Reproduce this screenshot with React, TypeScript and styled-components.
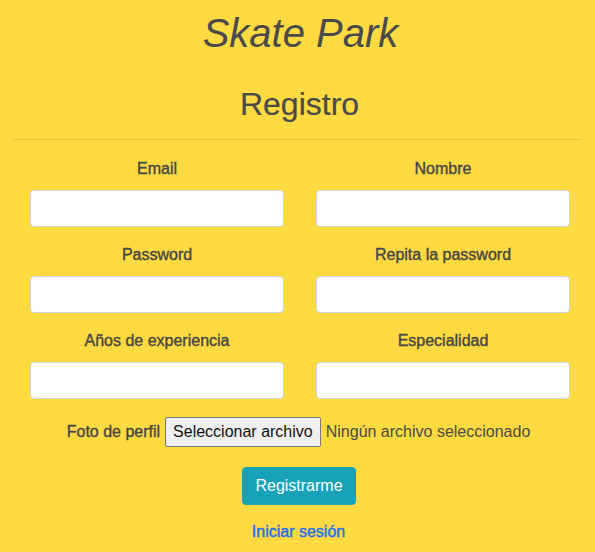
import styled, { createGlobalStyle } from "styled-components";

const GlobalStyle = createGlobalStyle`
  html, body {
    margin: 0;
    background: #ffda40;
  }
  body {
    font-family: "Liberation Sans", Arial, sans-serif;
    color: #4a4a4a;
  }
`;

const fields = [
  { label: "Email", type: "email" },
  { label: "Nombre", type: "text" },
  { label: "Password", type: "password" },
  { label: "Repita la password", type: "password" },
  { label: "Años de experiencia", type: "text" },
  { label: "Especialidad", type: "text" },
];

export const App = () => {
  return (
    <>
      <GlobalStyle />
      <Page>
        <Title>Skate Park</Title>
        <Subtitle>Registro</Subtitle>
        <Divider />
        <Form onSubmit={(e) => e.preventDefault()}>
          <FieldGrid>
            {fields.map((field) => (
              <Field key={field.label}>
                <Label>{field.label}</Label>
                <Input type={field.type} />
              </Field>
            ))}
          </FieldGrid>
          <FileRow>
            <Label>Foto de perfil</Label>
            <FileButton type="button">Seleccionar archivo</FileButton>
            <FileName>Ningún archivo seleccionado</FileName>
          </FileRow>
          <SubmitButton type="submit">Registrarme</SubmitButton>
          <LoginLink href="#">Iniciar sesión</LoginLink>
        </Form>
      </Page>
    </>
  );
};

export default App;

const Page = styled.div`
  padding: 0 13px;
  text-align: center;
`;

const Title = styled.h1`
  margin: 0;
  padding: 11px 0 0 6px;
  font-size: 40px;
  font-style: italic;
  font-weight: 400;
  line-height: 44px;
`;

const Subtitle = styled.h2`
  margin: 30px 0 0;
  padding-left: 4px;
  font-size: 32px;
  font-weight: 400;
  line-height: 38px;
  -webkit-text-stroke: 0.2px #4a4a4a;
`;

const Divider = styled.hr`
  margin: 16px 0 0;
  border: 0;
  border-top: 1px solid #e8c63a;
`;

const Form = styled.form`
  display: flex;
  flex-direction: column;
  align-items: center;
`;

const FieldGrid = styled.div`
  align-self: stretch;
  display: grid;
  grid-template-columns: 254px 254px;
  column-gap: 32px;
  padding: 19px 17px 0;
`;

const Field = styled.div`
  display: flex;
  flex-direction: column;
  align-items: center;
  margin-bottom: 18px;
`;

const Label = styled.label`
  font-size: 16px;
  font-weight: 400;
  line-height: 20px;
  color: #474747;
  -webkit-text-stroke: 0.4px #474747;
`;

const Input = styled.input`
  box-sizing: border-box;
  width: 100%;
  height: 37px;
  margin-top: 11px;
  border: 1px solid #ced4da;
  border-radius: 4px;
  background: #fff;
  font: inherit;
`;

const FileRow = styled.div`
  display: flex;
  align-items: center;
  gap: 5px;
  height: 30px;
  padding-left: 2px;
`;

const FileButton = styled.button`
  box-sizing: border-box;
  height: 30px;
  padding: 0 7px;
  border: 1px solid #767676;
  border-radius: 2px;
  background: #efefef;
  color: #111;
  font-family: "Liberation Sans", Arial, sans-serif;
  font-size: 16px;
`;

const FileName = styled.span`
  font-size: 16px;
  color: #4a4a4a;
`;

const SubmitButton = styled.button`
  margin: 20px 0 0 3px;
  height: 38px;
  padding: 0 12px;
  border: 1px solid #17a2b8;
  border-radius: 4px;
  background: #17a2b8;
  color: #fff;
  font-family: "Liberation Sans", Arial, sans-serif;
  font-size: 16px;
`;

const LoginLink = styled.a`
  margin: 18px 0 0 2px;
  font-size: 16px;
  font-weight: 400;
  color: #1a6ef2;
  text-decoration: none;
  -webkit-text-stroke: 0.4px #1a6ef2;
`;
